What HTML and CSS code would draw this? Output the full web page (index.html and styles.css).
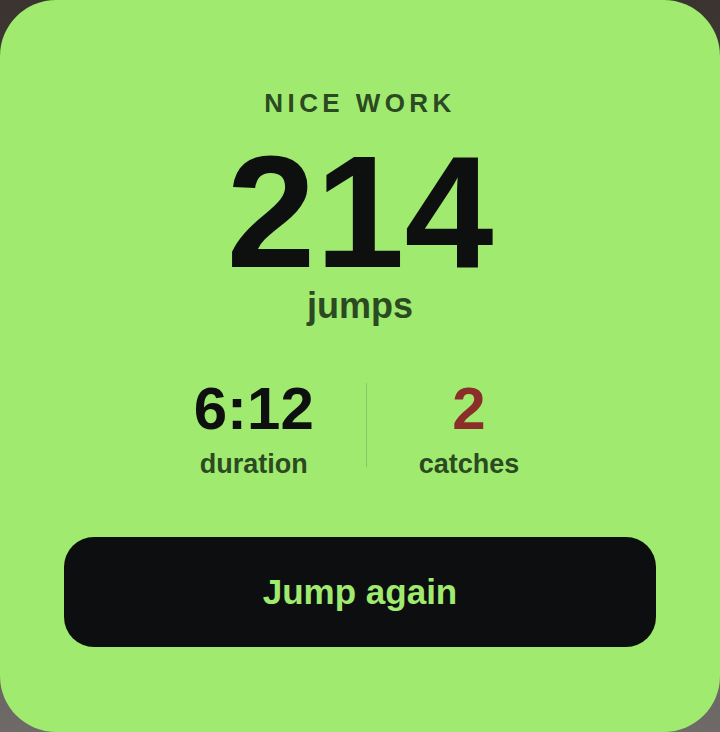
FILE: index.html
```html
<!DOCTYPE html>
<html lang="en">
<head>
<meta charset="utf-8">
<title>Nice work</title>
<link rel="stylesheet" href="styles.css">
</head>
<body>
<div class="backdrop">
  <section class="card">
    <p class="eyebrow">NICE WORK</p>
    <p class="count">214</p>
    <p class="unit">jumps</p>
    <div class="stats">
      <div class="stat">
        <span class="stat-value">6:12</span>
        <span class="stat-label">duration</span>
      </div>
      <div class="divider"></div>
      <div class="stat">
        <span class="stat-value stat-value--alert">2</span>
        <span class="stat-label">catches</span>
      </div>
    </div>
    <button class="cta" type="button">Jump again</button>
  </section>
</div>
</body>
</html>
```
FILE: styles.css
```css
* { box-sizing: border-box; }
html, body {
  margin: 0;
  padding: 0;
  width: 720px;
  height: 732px;
  overflow: hidden;
}
body {
  font-family: "Liberation Sans", Arial, Helvetica, sans-serif;
  font-weight: 700;
}
.backdrop {
  width: 720px;
  height: 732px;
  background: linear-gradient(180deg, #3b332f 0%, #4f4845 40%, #6e6a68 100%);
}
.card {
  width: 720px;
  height: 732px;
  background: #a0ea70;
  border-radius: 56px;
  padding: 88px 64px 0;
  display: flex;
  flex-direction: column;
  align-items: center;
}
.card p { margin: 0; }
.eyebrow {
  font-size: 26px;
  line-height: 30px;
  letter-spacing: 4.4px;
  margin-right: -4.4px;
  color: #2b4a22;
}
.count {
  margin-top: 23.6px !important;
  font-size: 160px;
  line-height: 140px;
  color: #0e1010;
}
.unit {
  margin-top: 4px !important;
  font-size: 36px;
  line-height: 40px;
  color: #2b4a22;
}
.stats {
  margin-top: 51.6px;
  display: flex;
  align-items: stretch;
  padding-right: 7px;
}
.stat {
  display: flex;
  flex-direction: column;
  align-items: center;
  padding: 0 52px;
}
.stat-value {
  font-size: 60px;
  line-height: 64px;
  color: #0e1010;
}
.stat-value--alert { color: #8b2e2a; }
.stat-label {
  margin-top: 6.4px;
  font-size: 27px;
  line-height: 32px;
  color: #2b4a22;
}
.divider {
  width: 1px;
  height: 84px;
  align-self: center;
  margin-top: -6px;
  background: #86c760;
}
.cta {
  margin-top: 57.4px;
  width: 592px;
  height: 110px;
  border: 0;
  border-radius: 30px;
  background: #0d0e10;
  color: #a0ea70;
  font-family: "Liberation Sans", Arial, Helvetica, sans-serif;
  font-weight: 700;
  font-size: 35px;
  line-height: 40px;
  padding: 0;
  display: flex;
  align-items: center;
  justify-content: center;
}
```
